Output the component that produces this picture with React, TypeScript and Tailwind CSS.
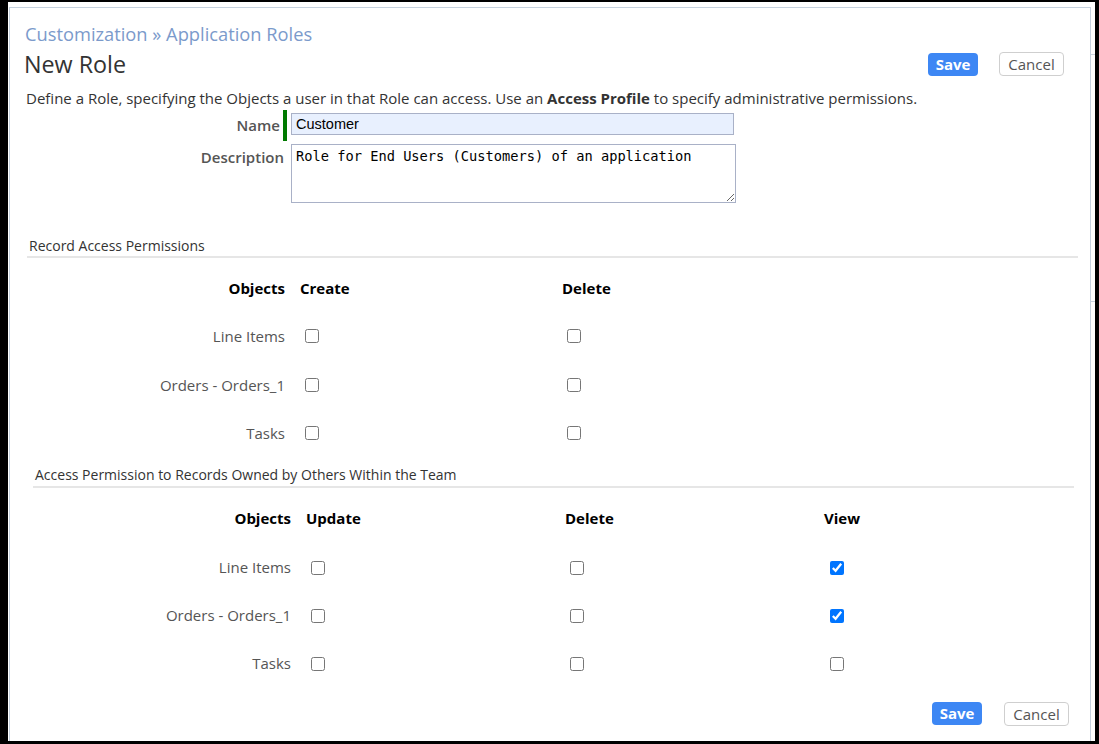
import React from "react";

const rows1 = ["Line Items", "Orders - Orders_1", "Tasks"];
const rows2: [string, boolean][] = [
  ["Line Items", true],
  ["Orders - Orders_1", true],
  ["Tasks", false],
];

function Box({ checked = false }: { checked?: boolean }) {
  return (
    <input
      type="checkbox"
      defaultChecked={checked}
      className="m-0 w-[14px] h-[14px] block"
    />
  );
}

export default function App() {
  return (
    <div
      className="w-full h-screen bg-black pl-[8px] pt-[2px] pr-[4px] pb-[3px] overflow-hidden"
      style={{ fontFamily: '"Open Sans", sans-serif' }}
    >
      <div className="relative bg-white h-full pl-[1px] pt-[5px] pr-[4px] overflow-hidden">
        <div className="absolute right-0 top-[52px] w-[4px] h-px bg-[#c8d3df]" />
        <div className="absolute right-0 top-[299px] w-[4px] h-px bg-[#c8d3df]" />
        <div className="border-l border-t border-r border-[#c5d1de] h-[760px] flex flex-col">
          {/* breadcrumb */}
          <div className="mt-[14px] pl-[15px] h-[24px] leading-[24px] text-[18.3px] text-[#7b9acb]">
            Customization » Application Roles
          </div>
          <div className="mt-[2px] h-[32px] flex items-center pl-[14px] pr-[26px]">
            <div className="text-[23.3px] text-[#333] leading-[32px]">New Role</div>
            <div className="ml-auto flex items-center gap-[21px]">
              <button className="w-[50px] h-[23px] rounded-[4px] bg-[#3d87f4] text-white font-bold text-[15px] leading-[23px]">
                Save
              </button>
              <button className="w-[65px] h-[24px] rounded-[4px] bg-white border border-[#cfcfcf] text-[#555] text-[15px] leading-[22px]">
                Cancel
              </button>
            </div>
          </div>
          <div className="mt-[8px] pl-[16px] h-[20px] leading-[20px] text-[15px] text-[#333] whitespace-nowrap">
            Define a Role, specifying the Objects a user in that Role can access. Use an{" "}
            <b>Access Profile</b> to specify administrative permissions.
          </div>
          {/* name row */}
          <div className="mt-[2px] h-[31px] flex">
            <div className="w-[270px] text-right font-semibold text-[15px] text-[#555] leading-[31px]">
              Name
            </div>
            <div className="ml-[3px] w-[4px] h-[31px] bg-[#007a00]" />
            <div className="ml-[4px] mt-[3px] w-[443px] h-[22px] bg-[#e8f0fe] border border-[#a9b1c7] pl-[4px] text-[14.5px] leading-[20px] text-black" style={{ fontFamily: '"Liberation Sans", Arial, sans-serif' }}>
              Customer
            </div>
          </div>
          {/* description row */}
          <div className="mt-[3px] h-[59px] flex">
            <div className="w-[274px] text-right font-semibold text-[15px] text-[#555] leading-[26px]">
              Description
            </div>
            <textarea
              defaultValue="Role for End Users (Customers) of an application"
              className="ml-[7px] w-[445px] h-[59px] border border-[#a9b1c7] px-[4px] py-[2px] text-[13.7px] leading-[18px] text-black outline-none"
              style={{ fontFamily: '"DejaVu Sans Mono", monospace' }}
            />
          </div>
          {/* section 1 */}
          <div className="mt-[33px] ml-[17px] mr-[12px] h-[22px] border-b-2 border-[#e6e6e6] pl-[2px] text-[14px] text-[#333] leading-[20px]">
            Record Access Permissions
          </div>
          <div className="ml-[17px] mt-[18px] h-[24px] flex items-center font-bold text-[15px] text-black">
            <div className="w-[258px] text-right">Objects</div>
            <div className="ml-[15px] w-[262px]">Create</div>
            <div>Delete</div>
          </div>
          <div className="ml-[17px] mt-[12px] flex flex-col">
            {rows1.map((r) => (
              <div key={r} className="h-[48.5px] flex items-center text-[15px] text-[#555]">
                <div className="w-[258px] text-right">{r}</div>
                <div className="ml-[15px] w-[262px] pl-[5px]">
                  <Box />
                </div>
                <div className="pl-[5px]">
                  <Box />
                </div>
              </div>
            ))}
          </div>
          {/* section 2 */}
          <div className="mt-[7px] ml-[23px] mr-[16px] h-[23px] border-b-2 border-[#e6e6e6] pl-[2px] text-[14px] text-[#333] leading-[20px]">
            Access Permission to Records Owned by Others Within the Team
          </div>
          <div className="ml-[23px] mt-[19px] h-[24px] flex items-center font-bold text-[15px] text-black">
            <div className="w-[258px] text-right">Objects</div>
            <div className="ml-[15px] w-[259px]">Update</div>
            <div className="w-[259px]">Delete</div>
            <div>View</div>
          </div>
          <div className="ml-[23px] mt-[13px] flex flex-col">
            {rows2.map(([r, v]) => (
              <div key={r} className="h-[48px] flex items-center text-[15px] text-[#555]">
                <div className="w-[258px] text-right">{r}</div>
                <div className="ml-[15px] w-[259px] pl-[5px]">
                  <Box />
                </div>
                <div className="w-[259px] pl-[5px]">
                  <Box />
                </div>
                <div className="pl-[6px]">
                  <Box checked={v} />
                </div>
              </div>
            ))}
          </div>
          <div className="mt-[14px] flex justify-end items-center gap-[22px] pr-[21px]">
            <button className="w-[50px] h-[23px] rounded-[4px] bg-[#3d87f4] text-white font-bold text-[15px] leading-[23px]">
              Save
            </button>
            <button className="w-[65px] h-[24px] rounded-[4px] bg-white border border-[#cfcfcf] text-[#555] text-[15px] leading-[22px]">
              Cancel
            </button>
          </div>
        </div>
      </div>
    </div>
  );
}
